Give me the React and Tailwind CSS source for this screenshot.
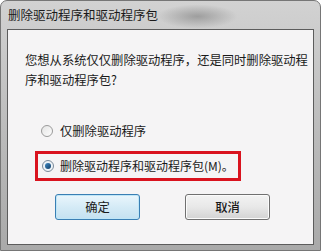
export default function App() {
  const font = { fontFamily: '"Noto Sans CJK SC", "Liberation Sans", sans-serif' };

  return (
    <div
      className="w-[321px] h-[251px] flex flex-col rounded-t-[7px] border border-[#767676] bg-gradient-to-b from-[#d2d2d2] via-[#bcbcbc] to-[#a9a9a9] px-[6px] pb-[5px] overflow-hidden"
      style={font}
    >
      <div className="h-[28px] flex items-center pl-[1px] text-[12.5px] text-[#1a1a1a] leading-none whitespace-nowrap bg-[radial-gradient(ellipse_40px_12px_at_62%_55%,#9e9e9e,transparent)]">
        删除驱动程序和驱动程序包
      </div>

      <div className="flex-1 flex flex-col border border-[#5c5c5c] bg-[#f5f4f5] pt-[20px] text-[12.3px] text-[#1a1a1a] whitespace-nowrap">
        <div className="pl-[17px] leading-[20px]">
          <div>您想从系统仅仅删除驱动程序，还是同时删除驱动程</div>
          <div>序和驱动程序包?</div>
        </div>

        <label className="mt-[33px] ml-[33px] flex items-center h-[16px] gap-[7px]">
          <span className="w-[12px] h-[12px] rounded-full border border-[#9a9a9a] bg-gradient-to-br from-[#e4e4e4] to-[#fdfdfd]" />
          <span>仅删除驱动程序</span>
        </label>

        <div className="mt-[12px] ml-[27px] w-[206px] h-[30px] border-[3px] border-[#d9131e] flex items-center pl-[4px] gap-[6px] text-[12px]">
          <span className="shrink-0 w-[12px] h-[12px] rounded-full border border-[#7b8a99] bg-[#eef3f7] flex items-center justify-center">
            <span className="w-[6px] h-[6px] rounded-full bg-gradient-to-br from-[#3f89c4] to-[#153f66]" />
          </span>
          <span>删除驱动程序和驱动程序包(M)。</span>
        </div>

        <div className="mt-[13px] flex">
          <button className="ml-[47px] w-[85px] h-[26px] rounded-[3px] border border-[#3a7fb4] bg-gradient-to-b from-[#eaf6fc] via-[#d5ebf6] to-[#c4e1f1] shadow-[inset_0_0_0_1px_#bfe6f7] text-[12.3px] text-[#1a1a1a]">
            确定
          </button>
          <button className="ml-[45px] w-[85px] h-[26px] rounded-[3px] border border-[#707070] bg-gradient-to-b from-[#f3f3f3] via-[#e8e8e8] to-[#d3d3d3] shadow-[inset_0_0_0_1px_#fbfbfb] text-[12.3px] text-[#1a1a1a] font-medium">
            取消
          </button>
        </div>
      </div>
    </div>
  );
}
